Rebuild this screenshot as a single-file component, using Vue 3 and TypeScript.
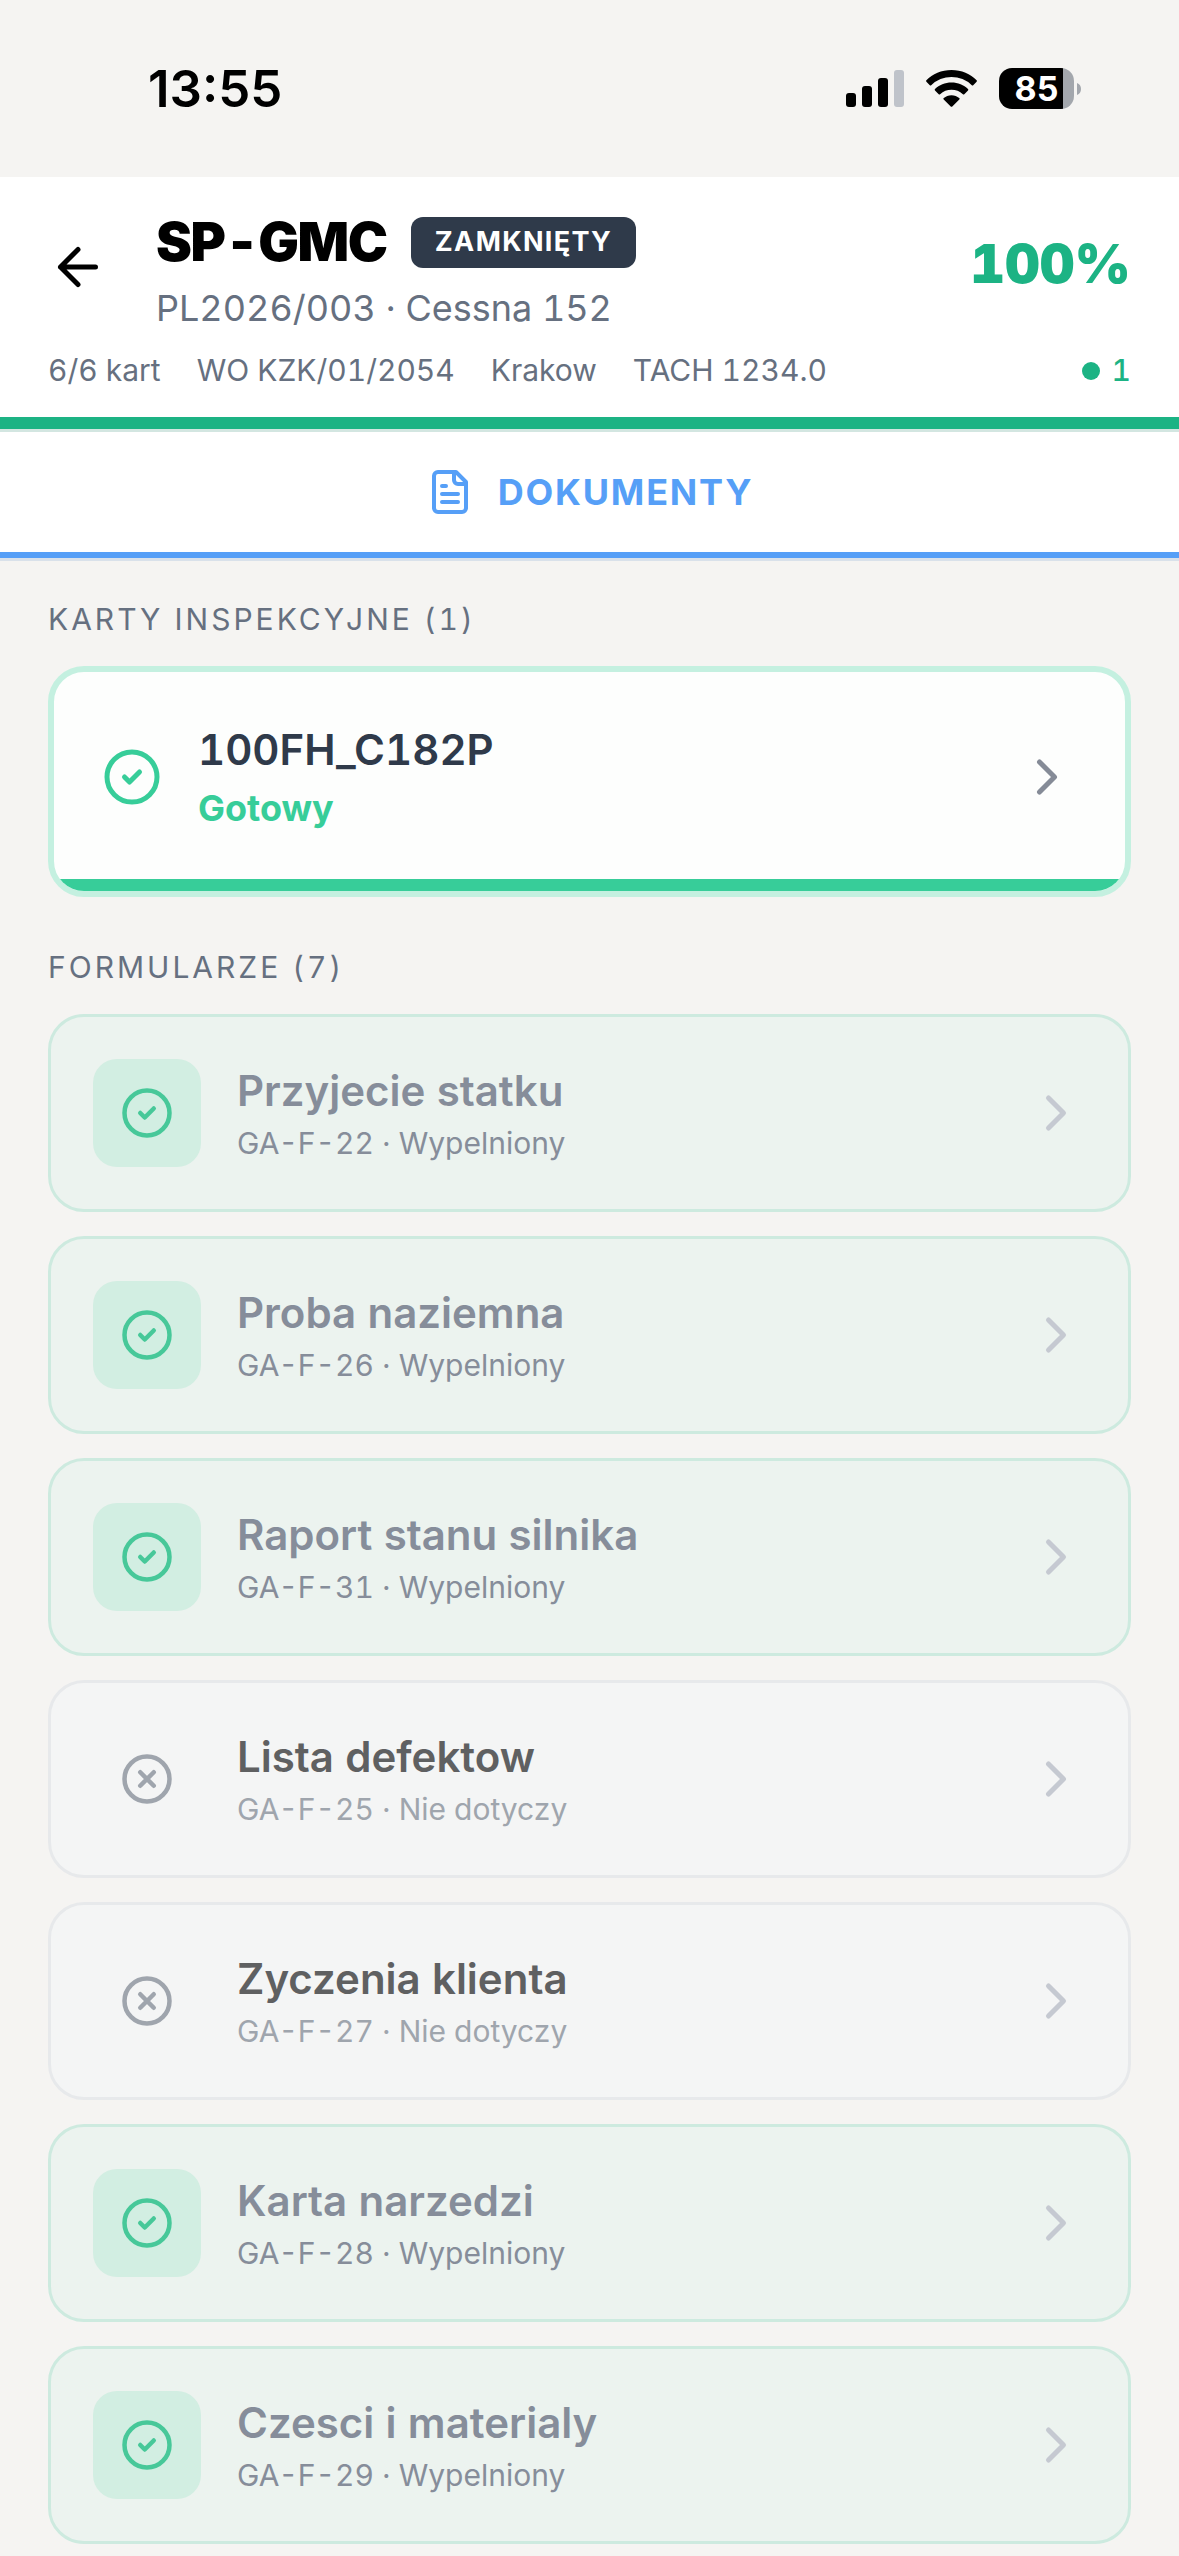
<script setup lang="ts">
interface FormItem {
  code: string
  title: string
  done: boolean
}

const meta: string[] = ['6/6 kart', 'WO KZK/01/2054', 'Krakow', 'TACH 1234.0']

const forms: FormItem[] = [
  { code: 'GA-F-22', title: 'Przyjecie statku', done: true },
  { code: 'GA-F-26', title: 'Proba naziemna', done: true },
  { code: 'GA-F-31', title: 'Raport stanu silnika', done: true },
  { code: 'GA-F-25', title: 'Lista defektow', done: false },
  { code: 'GA-F-27', title: 'Zyczenia klienta', done: false },
  { code: 'GA-F-28', title: 'Karta narzedzi', done: true },
  { code: 'GA-F-29', title: 'Czesci i materialy', done: true },
]
</script>

<template>
  <div class="screen">
    <div class="status-bar">
      <span class="clock">13:55</span>
      <div class="indicators">
        <svg class="signal" viewBox="0 0 58 37" aria-hidden="true">
          <rect x="0" y="23" width="10" height="14" rx="3" />
          <rect x="16" y="16" width="10" height="21" rx="3" />
          <rect x="32" y="8" width="10" height="29" rx="3" />
          <rect x="48" y="0" width="10" height="37" rx="3" fill="#bfc3ca" />
        </svg>
        <svg class="wifi" viewBox="0 0 51 37" aria-hidden="true">
          <path d="M25.500 0C35.500 0 44.500 4 50.600 10.300Q51.200 11 50.600 11.700L47.200 15.200Q46.500 15.800 45.800 15.200A29 29 0 0 0 5.200 15.200Q4.500 15.800 3.800 15.200L.4 11.700Q-.2 11 .4 10.300C6.500 4 15.500 0 25.500 0Z" />
          <path d="M25.500 12.600C32 12.600 37.800 15.100 42 19.100Q42.700 19.800 42 20.500L38.300 24.200Q37.600 24.800 36.900 24.200A17 17 0 0 0 14.100 24.200Q13.400 24.800 12.700 24.200L9 20.500Q8.300 19.800 9 19.100C13.200 15.100 19 12.600 25.500 12.600Z" />
          <path d="M25.500 25.200C28.500 25.200 31.200 26.300 33.200 28Q34 28.700 33.300 29.400L26.300 36.500Q25.500 37.200 24.700 36.500L17.700 29.400Q17 28.700 17.800 28C19.800 26.300 22.500 25.200 25.500 25.200Z" />
        </svg>
        <div class="battery">
          <span class="battery-level">85</span>
          <svg class="battery-cap" viewBox="0 0 4 12" aria-hidden="true">
            <path d="M0 0Q4 1.500 4 6T0 12Z" fill="#a3a7ad" />
          </svg>
        </div>
      </div>
    </div>

    <header class="header">
      <div class="header-main">
        <button class="back" type="button" aria-label="Wstecz">
          <svg class="icon icon-lg" viewBox="0 0 24 24"><path d="m12 19-7-7 7-7M19 12H5" /></svg>
        </button>
        <div class="heading">
          <div class="title-row">
            <h1>SP-GMC</h1>
            <span class="badge">ZAMKNIĘTY</span>
          </div>
          <p class="subtitle">PL2026/003 · Cessna 152</p>
        </div>
        <strong class="percent">100%</strong>
      </div>
      <div class="meta">
        <span v-for="entry in meta" :key="entry">{{ entry }}</span>
        <span class="online"><i class="dot"></i>1</span>
      </div>
    </header>
    <div class="progress"></div>

    <nav class="tabs">
      <button class="tab" type="button">
        <svg class="icon icon-sm" viewBox="0 0 24 24">
          <path d="M15 2H6a2 2 0 0 0-2 2v16a2 2 0 0 0 2 2h12a2 2 0 0 0 2-2V7Z" />
          <path d="M14 2v4a2 2 0 0 0 2 2h4M10 9H8M16 13H8M16 17H8" />
        </svg>
        <span>DOKUMENTY</span>
      </button>
    </nav>

    <main class="content">
      <section class="group">
        <h2>KARTY INSPEKCYJNE (1)</h2>
        <button class="inspection" type="button">
          <svg class="icon icon-lg inspection-icon" viewBox="0 0 24 24">
            <circle cx="12" cy="12" r="10" />
            <path d="m9 12 2 2 4-4" />
          </svg>
          <span class="labels">
            <span class="inspection-title">100FH_C182P</span>
            <span class="inspection-state">Gotowy</span>
          </span>
          <svg class="icon icon-lg chevron" viewBox="0 0 24 24"><path d="m9 18 6-6-6-6" /></svg>
        </button>
      </section>

      <section class="group">
        <h2>FORMULARZE (7)</h2>
        <div class="forms">
          <button
            v-for="form in forms"
            :key="form.code"
            type="button"
            class="form-card"
            :class="form.done ? 'done' : 'skipped'"
          >
            <span class="form-icon">
              <svg class="icon icon-md" viewBox="0 0 24 24">
                <circle cx="12" cy="12" r="10" />
                <path v-if="form.done" d="m9 12 2 2 4-4" />
                <path v-else d="m15 9-6 6M9 9l6 6" />
              </svg>
            </span>
            <span class="labels">
              <span class="form-title">{{ form.title }}</span>
              <span class="form-sub">{{ form.code }} · {{ form.done ? 'Wypelniony' : 'Nie dotyczy' }}</span>
            </span>
            <svg class="icon icon-lg chevron" viewBox="0 0 24 24"><path d="m9 18 6-6-6-6" /></svg>
          </button>
        </div>
      </section>
    </main>
  </div>
</template>

<style>
body {
  margin: 0;
  background: #f5f4f2;
}
</style>

<style scoped>
.screen {
  min-height: 100vh;
  background: #f5f4f2;
  color: #000;
  font-family: Inter, "Liberation Sans", sans-serif;
  font-variant-numeric: tabular-nums;
  box-sizing: border-box;
}

h1,
h2,
p {
  margin: 0;
}

button {
  margin: 0;
  padding: 0;
  border: 0;
  background: none;
  color: inherit;
  font: inherit;
  font-variant-numeric: inherit;
  text-align: left;
  cursor: pointer;
}

.icon {
  display: block;
  flex: none;
  fill: none;
  stroke: currentColor;
  stroke-width: 2;
  stroke-linecap: round;
  stroke-linejoin: round;
}

.icon-lg {
  width: 60px;
  height: 60px;
}

.icon-md {
  width: 54px;
  height: 54px;
}

.icon-sm {
  width: 48px;
  height: 48px;
}

.status-bar {
  display: flex;
  align-items: center;
  justify-content: space-between;
  height: 177px;
  padding: 0 98px 0 148px;
  box-sizing: border-box;
}

.clock {
  font-size: 51px;
  line-height: 60px;
  font-weight: 600;
  font-variant-numeric: normal;
}

.indicators {
  display: flex;
  align-items: center;
  gap: 22px;
}

.signal {
  width: 58px;
  height: 37px;
}

.wifi {
  width: 51px;
  height: 37px;
}

.battery {
  display: flex;
  align-items: center;
  gap: 3px;
}

.battery-level {
  width: 75px;
  border-radius: 13px;
  background: linear-gradient(to right, #000 85%, #a3a7ad 85%);
  color: #fff;
  font-size: 34px;
  line-height: 41px;
  font-weight: 700;
  text-align: center;
  font-variant-numeric: normal;
}

.battery-cap {
  width: 4px;
  height: 12px;
}

.header {
  padding: 27px 48px 24px;
  background: #fff;
}

.header-main {
  display: flex;
  align-items: center;
  gap: 48px;
}

.heading {
  flex: 1;
  display: flex;
  flex-direction: column;
  gap: 6px;
}

.title-row {
  display: flex;
  align-items: center;
  gap: 24px;
}

h1 {
  font-size: 54px;
  line-height: 76px;
  font-weight: 900;
  letter-spacing: -0.025em;
}

.badge {
  padding: 7px 24px 8px;
  border-radius: 12px;
  background: #2f3a4a;
  color: #fff;
  font-size: 27px;
  line-height: 36px;
  font-weight: 700;
  letter-spacing: 0.05em;
}

.subtitle {
  color: #667080;
  font-size: 36px;
  line-height: 44px;
}

.percent {
  padding-bottom: 6px;
  color: #1cb384;
  font-size: 54px;
  line-height: 60px;
  font-weight: 900;
}

.meta {
  display: flex;
  gap: 36px;
  margin-top: 18px;
  color: #667080;
  font-size: 30px;
  line-height: 45px;
}

.online {
  display: flex;
  align-items: center;
  gap: 12px;
  margin-left: auto;
  color: #1cb384;
  font-weight: 500;
}

.dot {
  width: 18px;
  height: 18px;
  border-radius: 50%;
  background: #1cb384;
}

.progress {
  height: 12px;
  background: #1cb384;
  border-bottom: 3px solid #d3e6e1;
}

.tabs {
  display: flex;
  background: #fff;
  border-bottom: 3px solid #d9e1ea;
}

.tab {
  flex: 1;
  display: flex;
  align-items: center;
  justify-content: center;
  gap: 24px;
  height: 126px;
  border-bottom: 6px solid #569ff7;
  color: #569ff7;
  font-size: 36px;
  line-height: 48px;
  font-weight: 700;
  letter-spacing: 0.05em;
}

.content {
  display: flex;
  flex-direction: column;
  gap: 48px;
  padding: 36px 48px 12px;
}

.group {
  display: flex;
  flex-direction: column;
  gap: 24px;
}

h2 {
  color: #667080;
  font-size: 30px;
  line-height: 45px;
  font-weight: 400;
  letter-spacing: 0.1em;
}

.labels {
  flex: 1;
  display: flex;
  flex-direction: column;
}

.inspection {
  position: relative;
  display: flex;
  align-items: center;
  gap: 36px;
  padding: 46px 48px 56px;
  border: 6px solid #c4f0e0;
  border-radius: 36px;
  background: #fdfefd;
  overflow: hidden;
}

.inspection::after {
  content: "";
  position: absolute;
  inset: auto 0 0;
  height: 12px;
  background: #37cd99;
}

.inspection-icon {
  color: #37cd99;
}

.inspection-title {
  color: #2f3a4a;
  font-size: 42px;
  line-height: 63px;
  font-weight: 600;
}

.inspection-state {
  color: #37cd99;
  font-size: 36px;
  line-height: 54px;
  font-weight: 700;
}

.inspection .chevron {
  color: #858b97;
}

.forms {
  display: flex;
  flex-direction: column;
  gap: 24px;
}

.form-card {
  display: flex;
  align-items: center;
  gap: 36px;
  padding: 42px;
  border: 3px solid;
  border-radius: 36px;
}

.form-icon {
  display: flex;
  align-items: center;
  justify-content: center;
  width: 108px;
  height: 108px;
  border-radius: 24px;
}

.form-title {
  font-size: 42px;
  line-height: 60px;
  font-weight: 600;
}

.form-sub {
  font-size: 30px;
  line-height: 45px;
}

.form-card .chevron {
  color: #c5c9d1;
}

.done {
  border-color: #cdeadf;
  background: #ecf3ef;
  color: #868d9a;
}

.done .form-icon {
  background: #d2eee2;
  color: #47c899;
}

.skipped {
  border-color: #e7e9eb;
  background: #f4f5f5;
  color: #9fa5ad;
}

.skipped .form-title {
  color: #5f6061;
}
</style>
